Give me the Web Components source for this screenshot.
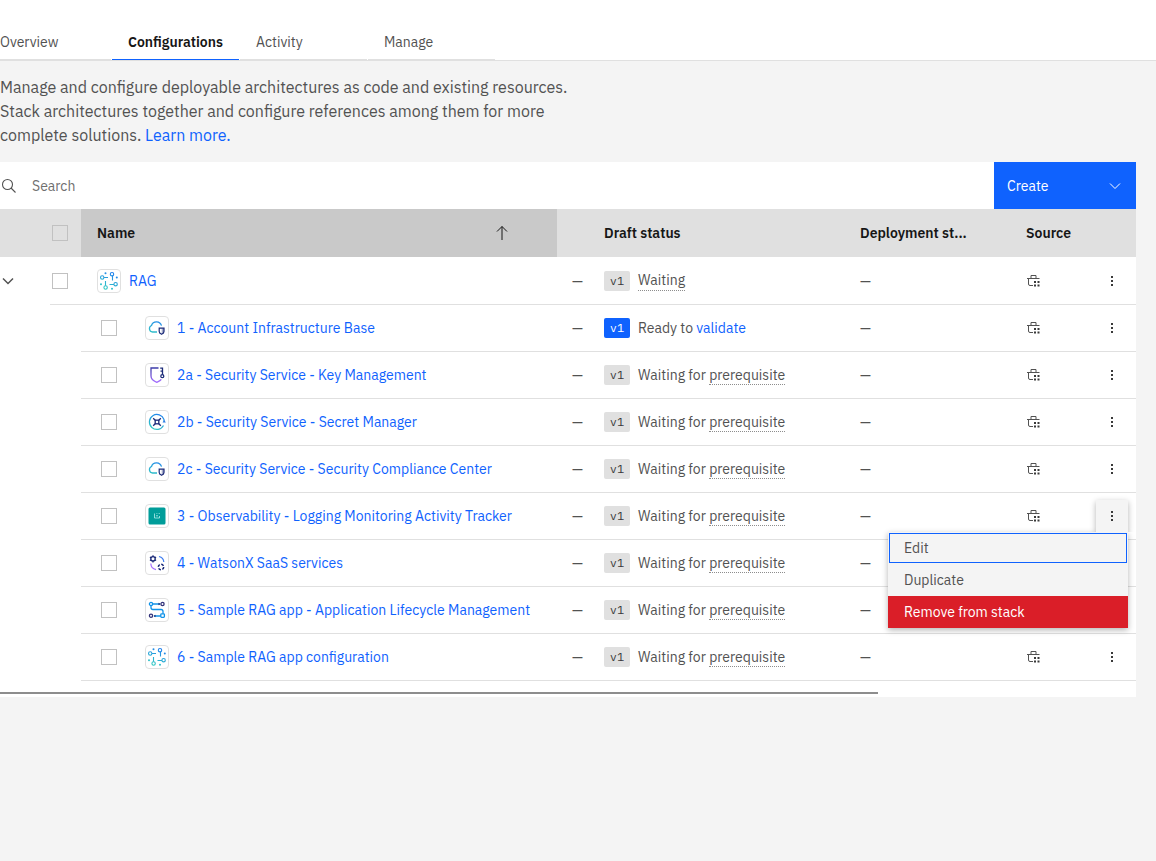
<!DOCTYPE html>
<html lang="en">
<head>
<meta charset="utf-8">
<title>Project configurations</title>
<style>
  body { margin: 0; background: #f4f4f4; color: #525252; font: 14px/20px "IBM Plex Sans", Inter, "Noto Sans", sans-serif; }
</style>
</head>
<body>
<project-page></project-page>
<script>
const define = (name, html, setup) => {
  const template = document.createElement('template');
  template.innerHTML = html;
  customElements.define(name, class extends HTMLElement {
    connectedCallback() {
      if (this.shadowRoot) return;
      this.attachShadow({ mode: 'open' }).append(template.content.cloneNode(true));
      if (setup) setup(this, this.shadowRoot);
    }
  });
};

const network = `<g fill="none" stroke="url(#g)" stroke-width="1.1"><circle cx="15" cy="5.2" r="1.7"/><circle cx="5.200" cy="8.500" r="1.700"/><circle cx="18.600" cy="15.200" r="1.700"/><circle cx="8.600" cy="18.500" r="1.700"/><path d="M15.500 7V11.500M7 8.500H11M17 15.500H12.500M8.500 16.800V12"/></g><g fill="url(#g)"><circle cx="8.500" cy="4.200" r="1"/><circle cx="19.800" cy="8.500" r="1"/><circle cx="4" cy="15.200" r="1"/><circle cx="15" cy="19.800" r="1"/></g>`;
const cloud = `<path d="M12 16H7.500A3.400 3.400 0 0 1 6.500 9.500A5.200 5.200 0 0 1 16.500 9.700" fill="none" stroke="url(#g)" stroke-width="1.3"/><path d="M14.200 12.200H19V15.500Q19 17.300 16.600 18.300Q14.200 17.300 14.200 15.500Z" fill="#fff" stroke="#1b2a78" stroke-width="1.200"/><path d="M16.700 12.500H19V15.500Q19 17 16.700 18Z" fill="#1b2a78" opacity=".4"/>`;
const ART = {
  network,
  cloud,
  key: `<path d="M13.500 5H6V13Q6 17 11.800 19.300Q15.500 17.500 16.300 16.300" fill="none" stroke="url(#v)" stroke-width="1.300"/><path d="M15.200 5.200H17.500V11.500M15.500 8.200H17.500" fill="none" stroke="#1b2a78" stroke-width="1.300"/><circle cx="17.300" cy="13.200" r="1.500" fill="none" stroke="#1b2a78" stroke-width="1.300"/>`,
  secret: `<path d="M18.500 15.500A7.500 7.500 0 1 1 19 9.500V11.500" fill="none" stroke="url(#g)" stroke-width="1.200"/><path d="M17.500 12.500L19.200 10L20.800 12.500Z" fill="#2c7be5"/><rect x="10.200" y="10.200" width="3.600" height="3.600" fill="none" stroke="#1b2a78" stroke-width="1.300"/><path d="M8.200 8.200L10.200 10.200M15.800 8.200L13.800 10.200M8.200 15.800L10.200 13.800M15.800 15.800L13.800 13.800" stroke="#1b2a78" stroke-width="1.300"/>`,
  tracker: `<rect x="3.500" y="3.500" width="17" height="17" rx="1.500" fill="#009d9a"/><path d="M9.500 9.500V14H14.500V12M11 11.800H13M11.500 9.500H12.300M13.700 9.500H14.700" fill="none" stroke="#b5efec" stroke-width=".8"/>`,
  gears: `<circle cx="8" cy="7.800" r="2.200" fill="none" stroke="#1b2a78" stroke-width="1.300"/><path d="M8 4.200V5.600M8 10V11.400M4.900 6L6.100 6.700M9.900 8.900L11.100 9.600M4.900 9.600L6.100 8.900M9.900 6.700L11.100 6" stroke="#1b2a78" stroke-width="1.200"/><path d="M14 5.500Q18.500 6.500 18.800 11" fill="none" stroke="#3f7df0" stroke-width="1.200"/><path d="M5.800 12.500Q6 17.500 11 18.600" fill="none" stroke="#a56eff" stroke-width="1.200"/><circle cx="16" cy="16" r="2.700" fill="none" stroke="#1b2a78" stroke-width="1.500" stroke-dasharray="2.700 1.500"/>`,
  flow: `<path d="M8 6H15M6 8V9.500Q6 11.500 8 11.500H16Q18 11.500 18 13.500V16M16 18H9" fill="none" stroke="#1192e8" stroke-width="1.300"/><path d="M13.500 4.800L15.500 6L13.500 7.200M10.500 16.800L8.500 18L10.500 19.200" fill="#1b2a78"/><g fill="#fff" stroke-width="1.300"><circle cx="6" cy="6" r="1.600" stroke="#1192e8"/><circle cx="17.500" cy="6" r="1.600" stroke="#32327a"/><circle cx="6" cy="17.700" r="1.600" stroke="#32327a"/><rect x="15.800" y="15.800" width="3.600" height="3.600" rx=".8" stroke="#1192e8"/></g>`
};

/* Rounded tile that frames a product icon */
define('product-icon', `<style>
  :host { display: block; flex: none; width: 24px; height: 24px; }
  svg { display: block; }
</style><svg width="24" height="24" viewBox="0 0 24 24" aria-hidden="true"></svg>`, (host, root) => {
  root.querySelector('svg').innerHTML = `<defs>
    <linearGradient id="g" gradientUnits="userSpaceOnUse" x1="16" y1="3" x2="8" y2="21"><stop stop-color="#1f7df0"/><stop offset="1" stop-color="#35d0c0"/></linearGradient>
    <linearGradient id="v" x1="0" y1="0" x2="0" y2="1"><stop stop-color="#3b3ba8"/><stop offset="1" stop-color="#a56eff"/></linearGradient></defs>
    <rect x=".5" y=".5" width="23" height="23" rx="3.500" fill="#fff" stroke="#e0e0e0"/>` + ART[host.getAttribute('name')];
});

define('check-box', `<style>
  :host { display: block; flex: none; width: 16px; height: 16px; }
  input { appearance: none; display: block; box-sizing: border-box; width: 16px; height: 16px; margin: 0; border: 1px solid #c1c1c1; background: transparent; }
  input:checked { background: #161616; }
</style><input type="checkbox">`, (host, root) => {
  root.querySelector('input').setAttribute('aria-label', host.getAttribute('label'));
});

define('version-tag', `<style>
  :host { display: block; flex: none; width: 26px; border-radius: 2px; background: #e0e0e0; color: #393939; font: 12px/20px "IBM Plex Mono", "DejaVu Sans Mono", monospace; text-align: center; }
  :host([active]) { background: #0f62fe; color: #fff; }
</style><slot></slot>`);

define('source-icon', `<style>:host, svg { display: block; width: 16px; height: 16px; }</style>
<svg viewBox="0 0 16 16" role="img" aria-label="Catalog" fill="none" stroke="#525252">
  <path d="M5 5V2.500H10V5M1 5.500H13.500M2.500 6V11Q2.500 12.500 4 12.500H7"/>
  <path fill="#393939" stroke="none" d="M8 8h2v2H8zM11.500 8h2v2h-2zM8 11.500h2v2H8zM11.500 11.500h2v2h-2z"/>
</svg>`);

define('menu-item', `<style>
  :host { display: block; }
  button { display: block; box-sizing: border-box; width: 100%; height: 32px; padding: 0 16px; border: 0; background: none; color: inherit; font: inherit; text-align: left; }
  :host([current]) { padding: 1px; }
  :host([current]) button { height: 30px; border: 1px solid #0f62fe; padding: 0 14px; }
  :host([danger]) { background: #da1e28; color: #fff; }
</style><button type="button" role="menuitem"><slot></slot></button>`);

define('overflow-menu', `<style>
  :host { display: block; position: relative; width: 32px; height: 32px; }
  .trigger { display: grid; place-items: center; width: 32px; height: 32px; padding: 0; border: 0; background: none; }
  .menu { display: none; }
  :host([open]) .trigger { background: #f4f4f4; box-shadow: 0 2px 6px rgba(0,0,0,.3); }
  :host([open]) .menu { display: block; position: absolute; z-index: 2; top: 32px; right: 0; width: 240px; background: #f4f4f4; box-shadow: 0 2px 6px rgba(0,0,0,.3); }
  :host([open]) .trigger { clip-path: inset(-10px -10px 0 -10px); position: relative; z-index: 3; }
</style>
<button class="trigger" type="button" aria-label="Options"><svg width="16" height="16" viewBox="0 0 16 16" fill="#393939"><path d="M7 3h2v2H7zM7 7h2v2H7zM7 11h2v2H7z"/></svg></button>
<div class="menu" role="menu"><slot></slot></div>`);

define('page-tabs', `<style>
  :host { display: block; background: #fff; border-bottom: 1px solid #e0e0e0; padding-top: 24px; }
  nav { display: flex; gap: 1px; }
  a { box-sizing: border-box; width: 127px; height: 36px; padding: 8px 0 0 16px; border-bottom: 1px solid #e0e0e0; color: #525252; text-decoration: none; }
  a:first-child { width: 111px; padding-left: 0; }
  a[aria-current] { color: #161616; font-weight: 600; border-color: #0f62fe; }
</style>
<nav aria-label="Project"><a href="#overview">Overview</a><a href="#configurations" aria-current="page">Configurations</a><a href="#activity">Activity</a><a href="#manage">Manage</a></nav>`);

define('table-toolbar', `<style>
  :host { display: flex; height: 47px; background: #fff; }
  label { flex: 1; display: flex; align-items: center; gap: 15px; }
  input { flex: 1; height: 32px; padding: 0; border: 0; outline: 0; background: none; color: inherit; font: inherit; }
  input::placeholder { color: #6f6f6f; opacity: 1; }
  button { display: flex; align-items: center; justify-content: space-between; width: 142px; padding: 0 13px; border: 0; background: #0f62fe; color: #fff; font: inherit; }
</style>
<label><svg width="17" height="16" viewBox="0 0 17 16" fill="none" stroke="#525252" stroke-width="1.100"><circle cx="7.500" cy="6.500" r="5"/><path d="M11 10L15.500 14.500"/></svg><input type="search" aria-label="Search" placeholder="Search"></label>
<button type="button">Create<svg width="16" height="16" viewBox="0 0 16 16" fill="none" stroke="#fff"><path d="M3 5.500L8 10.500L13 5.500"/></svg></button>`);

const CHILDREN = [
  ['cloud', '1 - Account Infrastructure Base'],
  ['key', '2a - Security Service - Key Management'],
  ['secret', '2b - Security Service - Secret Manager'],
  ['cloud', '2c - Security Service - Security Compliance Center'],
  ['tracker', '3 - Observability - Logging Monitoring Activity Tracker'],
  ['gears', '4 - WatsonX SaaS services'],
  ['flow', '5 - Sample RAG app - Application Lifecycle Management'],
  ['network', '6 - Sample RAG app configuration']
];

const menuItems = '<menu-item current>Edit</menu-item><menu-item>Duplicate</menu-item><menu-item danger>Remove from stack</menu-item>';
const tail = (status, open) => `<td class="dash">—</td><td><div class="status">${status}</div></td><td>—</td><td><source-icon></source-icon></td><td class="more">${open ? `<overflow-menu open>${menuItems}</overflow-menu>` : '<overflow-menu></overflow-menu>'}</td>`;
const rows = CHILDREN.map(([icon, name], i) => `<tr><td class="blank" colspan="2"></td><td class="name"><div class="item child"><check-box label="Select ${name}"></check-box><product-icon name="${icon}"></product-icon><a href="#config">${name}</a></div></td>${tail(i === 0 ? '<version-tag active>v1</version-tag><span>Ready to <a href="#validate">validate</a></span>' : '<version-tag>v1</version-tag><span>Waiting for <span class="hint">prerequisite</span></span>', i === 4)}</tr>`).join('');

define('config-table', `<style>
  :host { display: block; background: #fff; }
  table { width: 100%; table-layout: fixed; border-collapse: separate; border-spacing: 0; }
  th { height: 48px; padding: 0 0 0 16px; background: #e0e0e0; color: #161616; font-weight: 600; text-align: left; overflow: hidden; text-overflow: ellipsis; white-space: nowrap; }
  td { box-sizing: border-box; height: 47px; padding: 0 0 0 16px; border-bottom: 1px solid #e0e0e0; white-space: nowrap; }
  .parent td { height: 48px; }
  td.blank { border-color: transparent; }
  td.blank button { display: block; }
  .toggle { width: 16px; height: 16px; padding: 0; border: 0; background: none; }
  th.check, td.check { padding: 0 0 0 2px; }
  th.sorted { background: #c9c9c9; padding-right: 47px; }
  .sort { display: flex; justify-content: space-between; align-items: center; }
  td.blank, td.dash, td.more, th.more { padding: 0; }
  td.dash { padding-left: 15px; }
  .item, .status { display: flex; align-items: center; gap: 8px; }
  .child { padding-left: 4px; }
  .child check-box { margin-right: 20px; }
  a { color: #0f62fe; text-decoration: none; }
  .hint { border-bottom: 1px dotted #8d8d8d; }
  .thumb { width: 77.3%; height: 2px; background: #8d8d8d; }
  .track { padding: 11px 0 3px; }
</style>
<table>
  <colgroup><col style="width:50px"><col style="width:31px"><col><col style="width:31px"><col style="width:256px"><col style="width:166px"><col style="width:86px"><col style="width:40px"></colgroup>
  <thead><tr><th></th><th class="check"><check-box label="Select all"></check-box></th><th class="sorted" aria-sort="ascending"><div class="sort">Name<svg width="16" height="16" viewBox="0 0 16 16" fill="none" stroke="#161616"><path d="M8 15V1.500M3 6.500L8 1.500L13 6.500"/></svg></div></th><th></th><th>Draft status</th><th>Deployment st...</th><th>Source</th><th class="more"></th></tr></thead>
  <tbody>
    <tr class="parent"><td class="blank"><button class="toggle" type="button" aria-label="Collapse RAG" aria-expanded="true"><svg width="16" height="16" viewBox="0 0 16 16" fill="none" stroke="#525252" stroke-width="1.500"><path d="M3 5.500L8 10.500L13 5.500"/></svg></button></td><td class="check"><check-box label="Select RAG"></check-box></td><td><div class="item"><product-icon name="network"></product-icon><a href="#config">RAG</a></div></td>${tail('<version-tag>v1</version-tag><span class="hint">Waiting</span>')}</tr>
    ${rows}
  </tbody>
</table>
<div class="track"><div class="thumb"></div></div>`);

define('project-page', `<style>
  :host { display: block; }
  p { margin: 14px 0 15px; font-size: 16px; line-height: 24px; }
  a { color: #0f62fe; text-decoration: none; }
  section { margin-right: 20px; }
</style>
<page-tabs></page-tabs>
<main>
  <p>Manage and configure deployable architectures as code and existing resources.<br>Stack architectures together and configure references among them for more<br>complete solutions. <a href="#learn">Learn more.</a></p>
  <section aria-label="Configurations"><table-toolbar></table-toolbar><config-table></config-table></section>
</main>`);
</script>
</body>
</html>
